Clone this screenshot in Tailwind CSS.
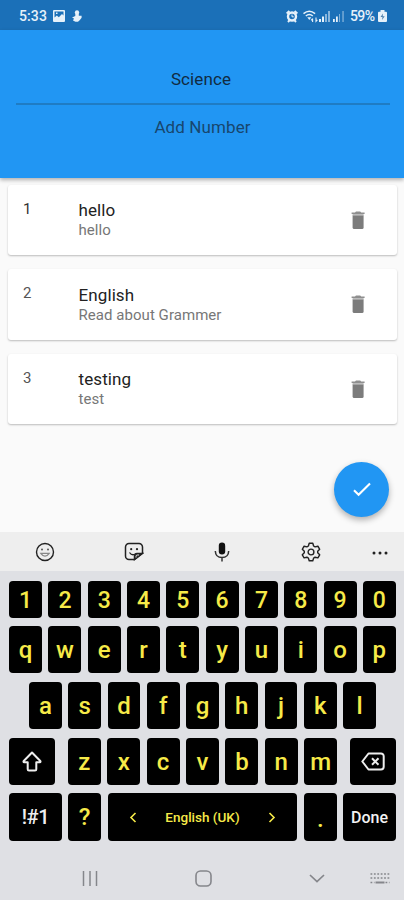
<!DOCTYPE html>
<html lang="en">
<head>
<meta charset="utf-8">
<meta name="viewport" content="width=device-width, initial-scale=1">
<title>Science</title>
<script src="https://cdn.jsdelivr.net/npm/@tailwindcss/browser@4"></script>
</head>
<body class="font-[Roboto,sans-serif] bg-[#fafafa]">
<svg class="hidden">
  <symbol id="trash" viewBox="0 0 14 19"><path d="M1.600 4.200h11v12.400a1.500 1.500 0 0 1-1.500 1.500h-8a1.500 1.500 0 0 1-1.500-1.500z" fill="#7c7c7c"/><path d="M.6 1.600H4L5 .4h4.200l1 1.200h3.400v1.500H.6z" fill="#8f8f8f"/><path d="M1.600 3.100h11v1.200h-11z" fill="#b5b5b5"/></symbol>
</svg>
<div class="w-[404px] h-[900px] flex flex-col overflow-hidden relative">
  <div class="h-[30px] shrink-0 bg-[#1b70b8] flex items-center text-[#e6f1fa] pl-[19px] pr-[17px] pt-[2px] relative z-10">
    <span class="text-[14px] leading-4 w-[34px] tracking-[0.1px] font-medium">5:33</span>
    <svg class="w-3 h-3" viewBox="0 0 12 12"><path fill-rule="evenodd" d="M1 0h10a1 1 0 0 1 1 1v10a1 1 0 0 1-1 1H1a1 1 0 0 1-1-1V1a1 1 0 0 1 1-1zM1.5 1.500v6l2.300-2 2 1.800L9 4l1.500 1.500v-4zM3 2.600h1.500v1.500H3z" fill="currentColor"/></svg>
    <svg class="w-[10px] h-3 ml-[7px]" viewBox="0 0 10 12" fill="currentColor"><circle cx="5" cy="2.300" r="2.100"/><path d="M3.300 3h3.500v2.700h2.800v2.100L7.900 9.900 6 11.800H3.500L1 10.500 2 8.500 0 7.500 3.300 6z"/></svg>
    <div class="flex-1"></div>
    <svg class="w-3 h-[13px]" viewBox="0 0 12 13" fill="none" stroke="currentColor"><circle cx="6" cy="6.500" r="4" stroke-width="2.400"/><path d="M.6 3.500 3.400.9M11.400 3.500 8.600.9M2 12l1.400-1.600M10 12 8.600 10.400" stroke-width="2"/><path d="M6 4.500v2.300h1.800" stroke-width="1"/></svg>
    <svg class="w-[15px] h-[13px] ml-[5px]" viewBox="0 0 15 13" fill="none" stroke="currentColor"><path d="M.5 3.700q5.800-4.800 11.600 0M2.800 6q3.500-2.800 7 0" stroke-width="1.500"/><path d="M4.300 7.300h4L6.300 10z" fill="currentColor" stroke="none"/><path d="M9.600 12V8.500M8.200 10.300l1.400-1.800M13 7.500v3.800l1.400-1.500" stroke-width="1.100"/></svg>
    <svg class="w-[11px] h-3 ml-px" viewBox="0 0 11 12" fill="currentColor"><path d="M0 9h2v3H0zM3 6.500h2V12H3z"/><path opacity=".55" d="M6 4h2v8H6zM9 1h2v11H9z"/></svg>
    <svg class="w-[11px] h-3 ml-[3px]" viewBox="0 0 11 12" fill="currentColor"><path d="M0 9h1.800v3H0zM3 6.500h1.800V12H3z"/><path opacity=".5" d="M6 4h1v8H6z"/><path opacity=".45" d="M9.300 1h1.500v11H9.300z"/></svg>
    <span class="text-[14px] leading-4 ml-[6px] w-[28px] tracking-[-0.6px] font-medium">59%</span>
    <svg class="w-[9px] h-3" viewBox="0 0 9 12"><path d="M2.500 0h4v1.800H8a1 1 0 0 1 1 1V11a1 1 0 0 1-1 1H1a1 1 0 0 1-1-1V2.800a1 1 0 0 1 1-1h1.500z" fill="currentColor"/><path d="M5 3.500 2.500 7h2L4 10l2.700-3.800h-2z" fill="#4f81ad"/></svg>
  </div>
  <header class="h-[148px] shrink-0 bg-[#2196f3] relative z-10 shadow-[0_2px_4px_rgba(0,0,0,0.3)] text-center pt-[38px] pl-4 pr-[14px] text-[17px] leading-[22px]">
    <div class="h-[37px] border-b-2 border-[#1f7cc4] text-[#112b42] tracking-[0.1px] pr-[4px]">Science</div>
    <div class="pt-[11px] pr-px text-[#18466e] tracking-[0.1px]">Add Number</div>
  </header>
  <main class="flex-1 flex flex-col gap-[14px] pt-[6.500px] pl-2 pr-[7px]">
    <article class="h-[70.500px] bg-white rounded-[3px] shadow-[0_1px_2px_rgba(0,0,0,0.25)] flex items-start pl-[15px]">
      <span class="w-[55.500px] text-[15px] leading-5 pt-[14px] text-[#333]">1</span>
      <div class="flex-1 pt-[15.500px]"><h2 class="text-[17px] leading-5 text-[#222] tracking-[0.1px]">hello</h2><p class="text-[15px] leading-5 text-[#777] tracking-[0.05px]">hello</p></div>
      <svg class="w-[14px] h-[19px] mt-[26px] mr-[32px]"><use href="#trash"/></svg>
    </article>
    <article class="h-[70.500px] bg-white rounded-[3px] shadow-[0_1px_2px_rgba(0,0,0,0.25)] flex items-start pl-[15px]">
      <span class="w-[55.500px] text-[15px] leading-5 pt-[14px] text-[#555]">2</span>
      <div class="flex-1 pt-[15.500px]"><h2 class="text-[17px] leading-5 text-[#222] tracking-[0.1px]">English</h2><p class="text-[15px] leading-5 text-[#777] tracking-[0.05px]">Read about Grammer</p></div>
      <svg class="w-[14px] h-[19px] mt-[26px] mr-[32px]"><use href="#trash"/></svg>
    </article>
    <article class="h-[70.500px] bg-white rounded-[3px] shadow-[0_1px_2px_rgba(0,0,0,0.25)] flex items-start pl-[15px]">
      <span class="w-[55.500px] text-[15px] leading-5 pt-[14px] text-[#555]">3</span>
      <div class="flex-1 pt-[15.500px]"><h2 class="text-[17px] leading-5 text-[#222] tracking-[0.1px]">testing</h2><p class="text-[15px] leading-5 text-[#777] tracking-[0.05px]">test</p></div>
      <svg class="w-[14px] h-[19px] mt-[26px] mr-[32px]"><use href="#trash"/></svg>
    </article>
  </main>
  <button class="absolute left-[334px] top-[462px] size-[55px] rounded-full bg-[#2196f3] shadow-[0_3px_6px_rgba(0,0,0,0.3)] flex items-center justify-center" aria-label="Save">
    <svg class="w-5 h-[15px]" viewBox="0 0 20 15"><path d="M2 8.200 6.600 12.700 18 1.500" fill="none" stroke="#fff" stroke-width="2.100"/></svg>
  </button>
  <div class="h-[39px] shrink-0 bg-[#eeeeee] flex items-center pl-[35px] pr-[16px] text-[#222]">
    <svg class="size-5" viewBox="0 0 20 20" fill="none" stroke="currentColor" stroke-width="1.400"><circle cx="10" cy="10" r="8.500"/><path d="M5.800 11.300q4.200 5.800 8.400 0z" stroke="#888" stroke-width="1.200"/><circle cx="7" cy="7.500" r="1" fill="#555" stroke="none"/><circle cx="13" cy="7.500" r="1" fill="#555" stroke="none"/></svg>
    <svg class="size-5 ml-[69px]" viewBox="0 0 20 20" fill="none" stroke="currentColor" stroke-width="1.500"><path d="M10.500 17.500H5A3.500 3.500 0 0 1 1.500 14V5A3.500 3.500 0 0 1 5 1.500h10A3.500 3.500 0 0 1 18.500 5v6z"/><path d="M10.500 17.500V14a2.500 2.500 0 0 1 2.500-2.500h5.500z" fill="#333"/><path d="M12 15.500v-1a1.500 1.500 0 0 1 1.500-1.500H15" stroke="#eee" stroke-width=".9"/><path d="M5.500 10.500q2 3 4.800 2" stroke-width="1.300"/><circle cx="7.200" cy="7.200" r="1.100" fill="currentColor" stroke="none"/><circle cx="13" cy="7.200" r="1.100" fill="currentColor" stroke="none"/></svg>
    <svg class="w-4 h-5 ml-[70px]" viewBox="0 0 16 20"><rect x="4.800" y=".5" width="6.400" height="12" rx="3.200" fill="#111"/><path d="M1.300 9q.3 6.600 6.700 6.600T14.700 9M8 15.600v4" fill="none" stroke="#333" stroke-width="1.500"/></svg>
    <svg class="size-5 ml-[71px]" viewBox="0 0 20 20" fill="none" stroke="currentColor" stroke-width="1.400" stroke-linejoin="round"><circle cx="10" cy="10" r="2.900"/><path d="M8.200 1.300h3.600l.8 2.700 1.500.9 2.800-.7 1.800 3.100-2 2v1.500l2 2-1.800 3.100-2.800-.7-1.500.9-.8 2.700H8.200l-.8-2.700-1.500-.9-2.800.7-1.800-3.100 2-2V9.300l-2-2 1.800-3.100 2.800.7L7.400 4z"/></svg>
    <div class="flex-1"></div>
    <svg class="w-4 h-1 mt-[2px]" viewBox="0 0 16 4" fill="#222"><circle cx="2" cy="2" r="1.500"/><circle cx="8" cy="2" r="1.500"/><circle cx="14" cy="2" r="1.500"/></svg>
  </div>
  <div class="h-[329px] shrink-0 bg-[#dfe0e4] pt-[9.500px] pl-[9.200px] pr-[8.200px] flex flex-col gap-[8.300px] text-[#f6ea48] font-medium text-[23px] leading-[28px] text-center">
    <div class="h-[37.200px] shrink-0 grid grid-cols-10 gap-[6.400px] *:bg-black *:rounded-[4px] *:pt-[6px]">
      <div>1</div><div>2</div><div>3</div><div>4</div><div>5</div><div>6</div><div>7</div><div>8</div><div>9</div><div>0</div>
    </div>
    <div class="h-[47.500px] shrink-0 grid grid-cols-10 gap-[6.400px] *:bg-black *:rounded-[4px] *:pt-[10px] text-[24px]">
      <div>q</div><div>w</div><div>e</div><div>r</div><div>t</div><div>y</div><div>u</div><div>i</div><div>o</div><div>p</div>
    </div>
    <div class="h-[47.500px] shrink-0 px-[19.800px] grid grid-cols-9 gap-[6.400px] *:bg-black *:rounded-[4px] *:pt-[10px] text-[24px]">
      <div>a</div><div>s</div><div>d</div><div>f</div><div>g</div><div>h</div><div>j</div><div>k</div><div>l</div>
    </div>
    <div class="h-[47.500px] shrink-0 flex justify-between *:bg-black *:rounded-[4px] text-[24px]">
      <div class="w-[46px] flex items-center justify-center"><svg class="w-5 h-[21px]" viewBox="0 0 20 21"><path d="M10 1.500 18.300 10q.6 1-.5 1.200h-3.500v7q0 1.300-1.300 1.300H7q-1.300 0-1.300-1.300v-7H2.200q-1.100-.2-.5-1.200z" fill="none" stroke="#eee" stroke-width="2" stroke-linejoin="round"/></svg></div>
      <div class="w-[269.400px] !bg-transparent grid grid-cols-7 gap-[6.400px] *:bg-black *:rounded-[4px] *:pt-[10px]"><div>z</div><div>x</div><div>c</div><div>v</div><div>b</div><div>n</div><div>m</div></div>
      <div class="w-[46px] flex items-center justify-center"><svg class="w-6 h-[19px]" viewBox="0 0 24 19" fill="none" stroke="#eee" stroke-width="2" stroke-linejoin="round"><path d="M7.500 1.500H20a2.700 2.700 0 0 1 2.700 2.700v10.600a2.700 2.700 0 0 1-2.700 2.700H7.500L1.300 9.500z"/><path d="m11 6.200 6.500 6.600m0-6.600L11 12.800"/></svg></div>
    </div>
    <div class="h-[47.500px] shrink-0 flex justify-between *:bg-black *:rounded-[4px] *:pt-[10px] text-[24px]">
      <div class="w-[52.500px] text-[#eee] text-[20px] tracking-[-0.5px]">!#1</div>
      <div class="w-[32.900px]">?</div>
      <div class="w-[189.700px] flex items-start justify-between px-[21px] text-[13.500px]"><svg class="w-2 h-[11px] mt-[9px]" viewBox="0 0 8 11"><path d="M6.500 1 2 5.500 6.500 10" fill="none" stroke="currentColor" stroke-width="1.600"/></svg><span>English (UK)</span><svg class="w-2 h-[11px] mt-[9px]" viewBox="0 0 8 11"><path d="M1.500 1 6 5.500 1.500 10" fill="none" stroke="currentColor" stroke-width="1.600"/></svg></div>
      <div class="w-[32.900px] !pt-[12px]">.</div>
      <div class="w-[52.500px] text-[#f2f2f2] text-[16px] !pt-[11px]">Done</div>
    </div>
    <div class="h-[58px] shrink-0 flex items-center pl-[73px] pr-[6px] text-[#85868b]">
      <svg class="w-4 h-[15px]" viewBox="0 0 16 15"><path d="M1.500 0v15M8 0v15M14.500 0v15" stroke="currentColor" stroke-width="1.500"/></svg>
      <svg class="w-[17px] h-[17px] ml-[97px]" viewBox="0 0 17 17"><rect x="1" y="1" width="15" height="15" rx="4.500" fill="none" stroke="currentColor" stroke-width="1.600"/></svg>
      <svg class="w-4 h-[9px] ml-[97px]" viewBox="0 0 16 9"><path d="M1 1l7 6.500L15 1" fill="none" stroke="currentColor" stroke-width="1.700"/></svg>
      <div class="flex-1"></div>
      <svg class="w-5 h-3 mt-[2px]" viewBox="0 0 20 12" stroke="currentColor" stroke-width="1.400"><path d="M.5 1h19M.5 5h19M.5 9.500h4M15.500 9.500h4" stroke-dasharray="1.800 1.600"/><path d="M5.500 9.500h9" stroke-width="2"/></svg>
    </div>
  </div>
</div>
</body>
</html>
